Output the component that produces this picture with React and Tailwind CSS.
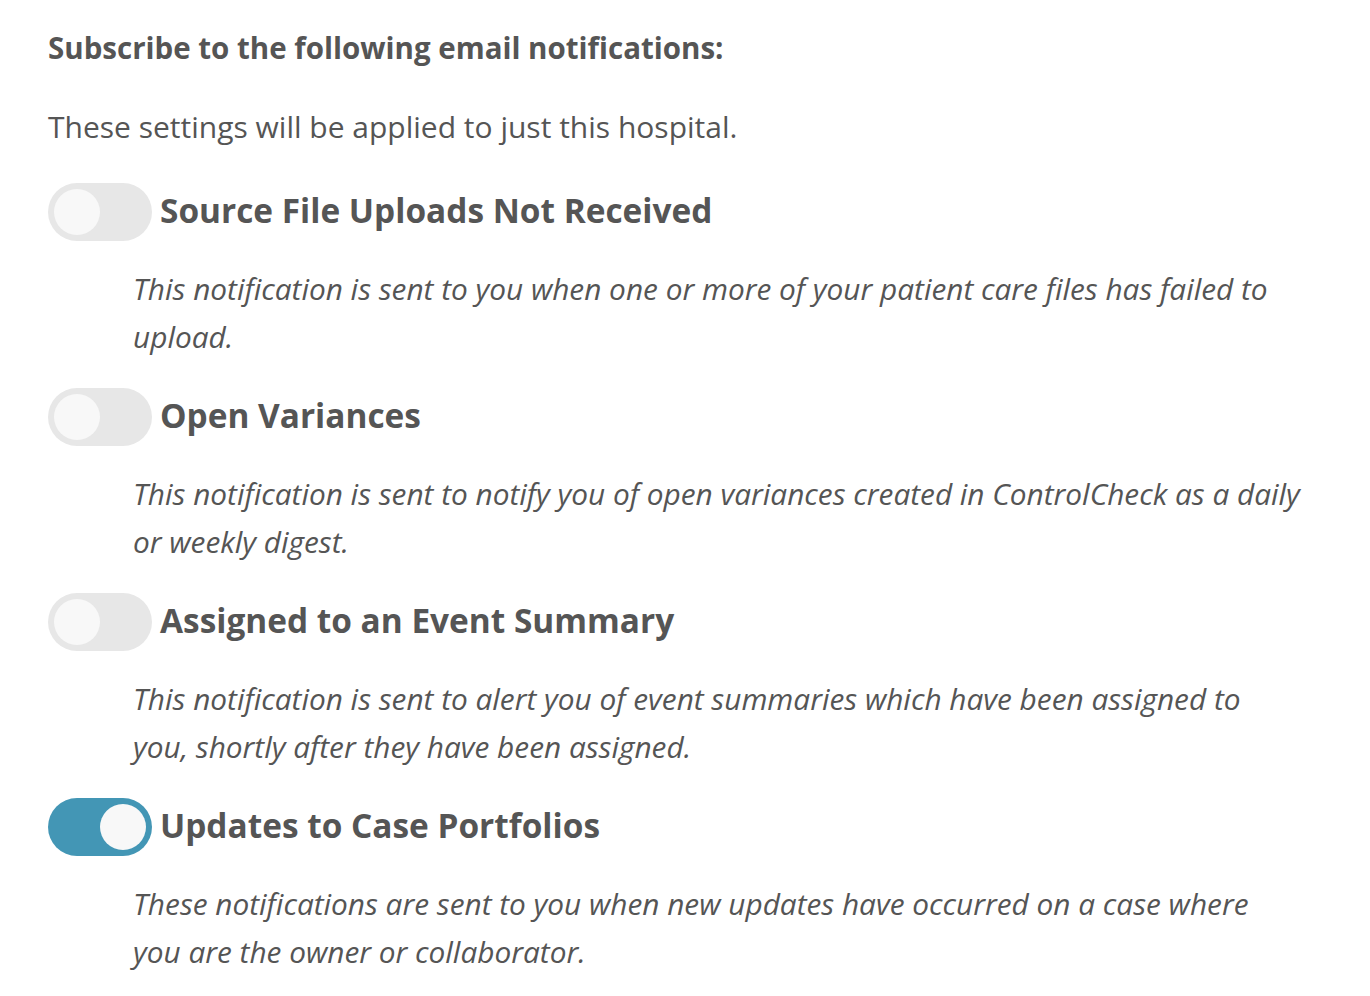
import React, { useState } from "react";

// line breaks kept where the original layout breaks them
const items = [
  {
    id: "source",
    title: "Source File Uploads Not Received",
    text: "This notification is sent to you when one or more of your patient care files has failed to\nupload.",
    on: false,
  },
  {
    id: "variances",
    title: "Open Variances",
    text: "This notification is sent to notify you of open variances created in ControlCheck as a daily\nor weekly digest.",
    on: false,
  },
  {
    id: "summary",
    title: "Assigned to an Event Summary",
    text: "This notification is sent to alert you of event summaries which have been assigned to\nyou, shortly after they have been assigned.",
    on: false,
  },
  {
    id: "portfolios",
    title: "Updates to Case Portfolios",
    text: "These notifications are sent to you when new updates have occurred on a case where\nyou are the owner or collaborator.",
    on: true,
  },
];

function Toggle({ checked, onChange }) {
  return (
    <button
      onClick={onChange}
      className={`w-[104px] h-[58px] shrink-0 rounded-full flex items-center px-[6px] transition-colors ${
        checked ? "bg-[#4396b5] justify-end" : "bg-[#e7e7e7] justify-start"
      }`}
    >
      <span className="block w-[46px] h-[46px] rounded-full bg-[#f8f8f8]" />
    </button>
  );
}

function App() {
  const [state, setState] = useState(
    Object.fromEntries(items.map((i) => [i.id, i.on])),
  );

  return (
    <div
      className="min-h-screen bg-white px-[48px] pt-[30px] text-[#555555]"
      style={{ fontFamily: "'Open Sans', sans-serif" }}
    >
      <h1 className="text-[29.5px] leading-[36px] font-bold">
        Subscribe to the following email notifications:
      </h1>
      <p className="mt-[41px] text-[30px] leading-[40px]">
        These settings will be applied to just this hospital.
      </p>

      <div className="mt-[36px]">
        {items.map((item, idx) => (
          <div key={item.id} className={idx > 0 ? "mt-[27px]" : ""}>
            <div className="flex items-center gap-[8px]">
              <Toggle
                checked={state[item.id]}
                onChange={() =>
                  setState({ ...state, [item.id]: !state[item.id] })
                }
              />
              <h2 className="pb-[5px] text-[33.4px] leading-[40px] font-bold">
                {item.title}
              </h2>
            </div>
            <p className="mt-[24px] pl-[85px] text-[29.8px] leading-[48px] italic whitespace-pre-line">
              {item.text}
            </p>
          </div>
        ))}
      </div>
    </div>
  );
}

export default App;
